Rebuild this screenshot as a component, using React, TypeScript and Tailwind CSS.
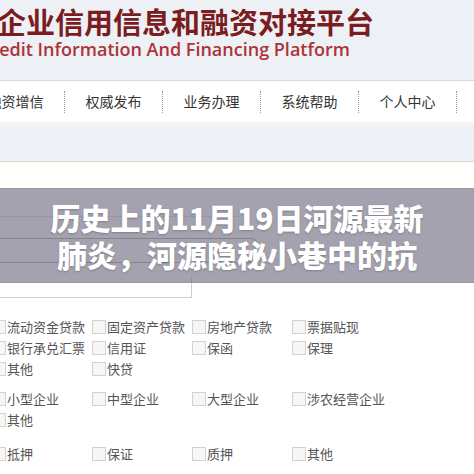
import * as React from 'react'

const navItems: string[] = ["融资增信", "权威发布", "业务办理", "系统帮助", "个人中心"];

const groups: string[][][] = [
    [["流动资金贷款", "固定资产贷款", "房地产贷款", "票据贴现"], ["银行承兑汇票", "信用证", "保函", "保理"], ["其他", "快贷"]],
    [["小型企业", "中型企业", "大型企业", "涉农经营企业"], ["其他"]],
    [["抵押", "保证", "质押", "其他"]],
];

const groupGaps: string[] = ["mt-[18px]", "mt-[9px]", "mt-[13px]"];

function Check(props: { label: string }) {
    return (
        <div className="w-[100px] shrink-0 flex items-center">
            <span className="w-[14px] h-[14px] border border-[#d2d2d2] bg-[#f6f6f6] shrink-0 mr-[1px]"></span>
            <span className="text-[13px] text-[#555] whitespace-nowrap leading-none">{props.label}</span>
        </div>
    )
}

export default function App() {
    return (
        <div className="w-[474px] h-[474px] overflow-hidden bg-white relative" style={{ fontFamily: '"Noto Sans CJK SC", "Noto Sans", sans-serif' }}>
            {/* header */}
            <div className="h-[81px] bg-[#edf1f5] border-b border-[#d9d9d9] overflow-hidden">
                <div className="ml-[-3px] pt-[2px] text-[29px] leading-[38px] font-semibold text-[#7b1c20] whitespace-nowrap">企业信用信息和融资对接平台</div>
                <div className="ml-[-20px] text-[18px] leading-[18px] font-semibold text-[#ad3338] whitespace-nowrap" style={{ fontFamily: '"Open Sans", sans-serif' }}>Credit Information And Financing Platform</div>
            </div>
            {/* nav */}
            <div className="h-[41px] bg-white flex items-center ml-[-33px]">
                {navItems.map(n =>
                    <div key={n} className="w-[98px] shrink-0 flex items-center">
                        <span className="w-[97px] text-center text-[14px] text-[#333]">{n}</span>
                        <span className="h-[22px] border-r border-dotted border-[#999]"></span>
                    </div>
                )}
            </div>
            <div className="h-[5px] bg-[#f3f3f3]"></div>
            <div className="h-[35px] bg-[#edf1f5] border-b border-[#d6d6d6]"></div>
            <div className="h-[26px] bg-[#fffffb]"></div>
            {/* form section under the banner */}
            <div className="relative">
                <div className="h-[29px] w-[240px] border-b border-[#e4e4e4]"></div>
                <div className="h-[21px]"></div>
                <div className="h-[25px] w-[258px] border border-l-0 border-[#bdbdbd] rounded-r-[7px]"></div>
                <div className="h-[15px]"></div>
                <div className="h-[20px] w-[192px] border-r border-b border-[#d0d0d0]"></div>
                <div className="absolute top-0 left-0 right-0 h-[95px] bg-[rgba(80,76,100,0.52)] border-y border-[#9a97a4] flex flex-col items-center justify-center">
                    <div className="text-white text-[30px] font-black leading-[37px] whitespace-nowrap" style={{ textShadow: '0 1px 2px rgba(60,60,70,0.35)' }}>历史上的11月19日河源最新</div>
                    <div className="text-white text-[30px] font-black leading-[37px] whitespace-nowrap" style={{ textShadow: '0 1px 2px rgba(60,60,70,0.35)' }}>肺炎，河源隐秘小巷中的抗</div>
                </div>
            </div>
            {/* checkbox groups */}
            {groups.map((g, gi) =>
                <div key={gi} className={groupGaps[gi]}>
                    {g.map((row, ri) =>
                        <div key={ri} className="h-[21px] flex items-center ml-[-8px]">
                            {row.map((c, ci) => <Check key={ci} label={c} />)}
                        </div>
                    )}
                </div>
            )}
        </div>
    )
}
